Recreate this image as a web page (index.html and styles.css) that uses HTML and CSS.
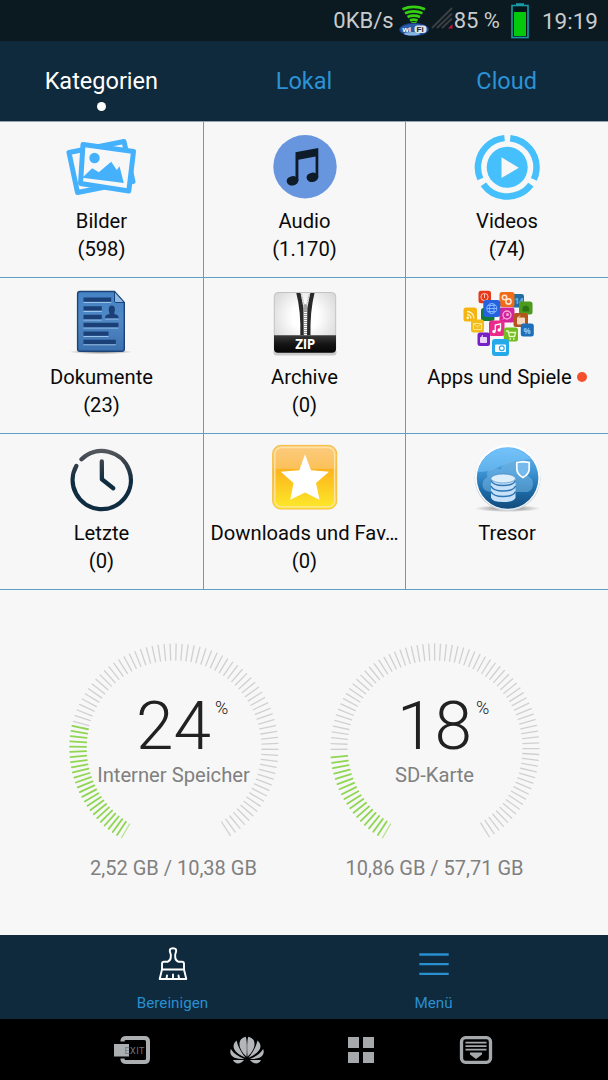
FILE: index.html
```
<!DOCTYPE html>
<html lang="de">

<head>
  <meta charset="UTF-8">
  <meta name="viewport" content="width=device-width, initial-scale=1.0">
  <title>Dateimanager</title>
  <link rel="stylesheet" href="styles.css">
</head>

<body>

  <div class="status">
    <span class="status__speed">0KB/s</span>
    <svg class="status__wifi" width="32" height="32" viewBox="0 0 32 32">
      <g fill="none" stroke="#35d010" stroke-width="2.800">
        <path d="M3.500 4.200Q14.500-.5 26 4.200"/>
        <path d="M6 8.200Q14.500 4.500 23.500 8.200"/>
        <path d="M8.500 12Q14.500 9.300 21 12"/>
        <path d="M11 15.500Q14.500 13.600 18.500 15.500"/>
        <path d="M12.500 18.500H17.500" stroke-width="3"/>
      </g>
      <ellipse cx="15" cy="24.500" rx="14.500" ry="6.200" fill="#2a5ca6" stroke="#18357c"/>
      <ellipse cx="13" cy="28.800" rx="8" ry="1.800" fill="#86b6e0"/>
      <rect x="15.500" y="20.500" width="12" height="7.500" rx="3" fill="#dde3e8"/>
      <text x="3.500" y="27" class="wifi-text" fill="#fff">wi</text>
      <text x="17.500" y="27" class="wifi-text" fill="#222">Fi</text>
    </svg>
    <svg class="status__signal" width="22" height="22" viewBox="0 0 22 22">
      <path d="M1 21 21 1M6 21 21 6.500M11 21 21 11.500" stroke="#3b3f42" stroke-width="2"/>
      <path d="M17 21.500 21.500 17V21.500Z" fill="#c2183c"/>
    </svg>
    <span class="status__percent">85 %</span>
    <svg class="status__battery" width="18" height="36" viewBox="0 0 18 36">
      <path d="M5 1.200H13" stroke="#189aa8" stroke-width="2"/>
      <rect x="1" y="2.500" width="16" height="32" fill="#06151a" stroke="#189aa8" stroke-width="1.600"/>
      <rect x="3" y="9" width="12" height="24" fill="#04c80c"/>
    </svg>
    <span class="status__time">19:19</span>
  </div>

  <div class="tabs">
    <div class="tab tab_active">Kategorien</div>
    <div class="tab">Lokal</div>
    <div class="tab">Cloud</div>
  </div>

  <div class="categories">
    <div class="category">
      <svg class="category__icon" viewBox="0 0 72 72">
        <g fill="#f7f7f7" stroke="#45b1fd" stroke-width="5" stroke-linejoin="round">
          <path d="M3 21.500 58 10.500 67 50.500 11.500 61.500Z"/>
          <path d="M17 13.500 67.500 20.500 62.800 60 14.500 52.500Z"/>
        </g>
        <circle cx="28.500" cy="27" r="5.200" fill="#45b1fd"/>
        <path d="M16.200 46.700 26.200 37.300 32.800 41.300 45.200 30.700 50.800 39 53.500 35.300 57.800 51.900Z" fill="#45b1fd"/>
      </svg>
      <div class="category__name">Bilder</div>
      <div class="category__count">(598)</div>
    </div>

    <div class="category">
      <svg class="category__icon" viewBox="0 0 72 72">
        <circle cx="36" cy="35.700" r="31.700" fill="#6796df"/>
        <g fill="#0e1b29">
          <path d="M26.500 21.300 49.300 17V46.500H46.600V25.500L29.400 28.700V50H26.500Z"/>
          <ellipse cx="23.500" cy="49.800" rx="5.900" ry="4.700" transform="rotate(-8 23.500 49.800)"/>
          <ellipse cx="43.400" cy="46.300" rx="5.900" ry="4.700" transform="rotate(-8 43.400 46.300)"/>
        </g>
      </svg>
      <div class="category__name">Audio</div>
      <div class="category__count">(1.170)</div>
    </div>

    <div class="category">
      <svg class="category__icon" viewBox="0 0 72 72">
        <circle cx="36.200" cy="36.300" r="29.300" fill="none" stroke="#45c0fd" stroke-width="6.500" stroke-dasharray="55.370 6" transform="rotate(-84.100 36.200 36.300)"/>
        <circle cx="36.200" cy="36.300" r="20.500" fill="#45c0fd"/>
        <path d="M30.500 26.300V47L47.800 36.700Z" fill="#f7f7f7"/>
      </svg>
      <div class="category__name">Videos</div>
      <div class="category__count">(74)</div>
    </div>

    <div class="category">
      <svg class="category__icon" viewBox="0 0 72 72">
        <defs>
          <linearGradient id="doc" x1="0" y1="0" x2="0" y2="1">
            <stop offset="0" stop-color="#4484c6"/>
            <stop offset="0.500" stop-color="#5088c4"/>
            <stop offset="1" stop-color="#3a70ae"/>
          </linearGradient>
          <radialGradient id="shadow">
            <stop offset="0" stop-color="#777"/>
            <stop offset="1" stop-color="#777" stop-opacity="0"/>
          </radialGradient>
        </defs>
        <ellipse cx="35" cy="64.800" rx="32" ry="2.500" fill="url(#shadow)"/>
        <path d="M14 4.500H48.500L58.300 15.500V62Q58.300 64.200 56 64.200H14Q11.600 64.200 11.600 62V7Q11.600 4.500 14 4.500Z" fill="url(#doc)" stroke="#1c4478" stroke-width="1.400"/>
        <path d="M48.500 4.500 58.300 15.500H49.800Q48.500 15.500 48.500 14Z" fill="#8fb9e4" stroke="#1c4478"/>
        <path d="M17.500 15.500H45.200M17.500 24.300H35.800M17.500 33H35.800M39.200 32H52.500M17.500 41H52.500M17.500 49.500H42.500M17.500 57.700H49.800" stroke="#9cc2ea" stroke-width="1.200"/>
        <path d="M17.500 12.600H45.200M17.500 21.300H35.800M17.500 30H35.800M17.500 38H52.500M17.500 46.700H42.500M17.500 55H49.800" stroke="#1b4078" stroke-width="4.300"/>
        <path d="M39 31.300Q39 27.500 43.500 27 41 18.800 45.800 18.600 50.600 18.800 48.200 27 52.700 27.500 52.700 31.300Z" fill="#1b4078"/>
      </svg>
      <div class="category__name">Dokumente</div>
      <div class="category__count">(23)</div>
    </div>

    <div class="category">
      <svg class="category__icon" viewBox="0 0 72 72">
        <defs>
          <radialGradient id="zip" cx="0.500" cy="0.400" r="0.700">
            <stop offset="0.300" stop-color="#fff"/>
            <stop offset="1" stop-color="#cfcfcf"/>
          </radialGradient>
          <linearGradient id="zipBase" x1="0" y1="0" x2="0" y2="1">
            <stop offset="0" stop-color="#3a3a3a"/>
            <stop offset="0.500" stop-color="#151515"/>
            <stop offset="1" stop-color="#050505"/>
          </linearGradient>
        </defs>
        <rect x="4.500" y="62" width="63" height="6.500" rx="3" fill="#cacaca"/>
        <rect x="5.300" y="5.500" width="61.400" height="60" rx="4" fill="url(#zip)" stroke="#c2c2c2"/>
        <path d="M27.300 6H31.500L34.500 21 34.800 48.300H31.300Q32 24 27.300 6Z" fill="#292929"/>
        <path d="M45.500 6H41.300L38.300 21 38 48.300H41.500Q41 24 45.500 6Z" fill="#292929"/>
        <path d="M32.500 7 35.300 19M40.300 7 37.500 19" stroke="#b5b5b5" stroke-width="1.200" stroke-dasharray="1 0.600"/>
        <path d="M36.400 18V48" stroke="#9a9a9a" stroke-width="3.200" stroke-dasharray="1 1"/>
        <rect x="34.700" y="17" width="3.400" height="7" rx="1.500" fill="#a5a5a5"/>
        <path d="M5 48.300H67V62Q67 65.700 63 65.700H9Q5 65.700 5 62Z" fill="url(#zipBase)"/>
        <text x="36" y="62" class="zip-text" text-anchor="middle" fill="#fff">ZIP</text>
      </svg>
      <div class="category__name">Archive</div>
      <div class="category__count">(0)</div>
    </div>

    <div class="category">
      <svg class="category__icon" viewBox="0 0 72 72">
        <rect x="7.500" y="3.700" width="12.500" height="12.500" rx="2.500" fill="#e5391c"/>
        <circle cx="13.500" cy="10" r="3.600" fill="none" stroke="#ffc3b0"/>
        <path d="M13.500 7V11" stroke="#ffc3b0"/>
        <rect x="40" y="7" width="13" height="13.500" rx="2.500" fill="#1f6fa6"/>
        <text x="43.500" y="17" class="tile-text" fill="#74b8e4">14</text>
        <rect x="48" y="14.500" width="13.500" height="13" rx="2.500" fill="#4d9a1c"/>
        <path d="M51.500 24.500H58V22A3.200 3.200 0 0 0 51.500 22Z" fill="#2b7413"/>
        <rect x="10" y="21" width="13.500" height="13" rx="2.500" fill="#157a37"/>
        <rect x="28.500" y="5" width="15" height="15" rx="2.500" fill="#ef6d1a"/>
        <g fill="none" stroke="#ffe3cc" stroke-width="1.600">
          <circle cx="33.500" cy="10.500" r="2.200"/>
          <circle cx="37.500" cy="14.500" r="2.600"/>
        </g>
        <rect x="28.500" y="20.500" width="15" height="15" rx="2.500" fill="#d3249b"/>
        <circle cx="36" cy="28" r="4" fill="none" stroke="#f6a6dc" stroke-width="1.300"/>
        <circle cx="36.500" cy="27.500" r="1.500" fill="#f6a6dc"/>
        <path d="M31.500 32.500 34 30.500" stroke="#f6a6dc"/>
        <rect x="42.500" y="26" width="14.500" height="14" rx="2.500" fill="#b4561b"/>
        <path d="M46.500 31H53.500V37H46.500ZM46.500 31 49 28.500" fill="#f5d8bd" stroke="#f5d8bd"/>
        <rect x="12.300" y="13" width="17" height="17" rx="3" fill="#2462e2"/>
        <g fill="none" stroke="#83b5fb">
          <circle cx="20.800" cy="21.500" r="5"/>
          <ellipse cx="20.800" cy="21.500" rx="2.300" ry="5"/>
          <path d="M15.800 21.500H25.800M16.800 18.500H24.800M16.800 24.500H24.800"/>
        </g>
        <rect x="-7.500" y="20.500" width="13.500" height="14" rx="2.500" fill="#f4b512"/>
        <g fill="none" stroke="#fff2bd" stroke-width="1.300">
          <path d="M-4 27.500A4 4 0 0 1 0 31.500M-4 24.500A7 7 0 0 1 3 31.500"/>
          <circle cx="-3.200" cy="30.800" r="0.700"/>
        </g>
        <rect x="0" y="32.500" width="13" height="13" rx="2.500" fill="#f2bd1a"/>
        <path d="M2.500 36.500H10.500V42.500H2.500ZM2.500 36.500 6.500 40 10.500 36.500" fill="none" stroke="#fbe48c"/>
        <rect x="49.800" y="36.500" width="13" height="13" rx="2.500" fill="#1e6fb9"/>
        <text x="52.500" y="46.500" class="tile-text" fill="#8cc8f7">%</text>
        <rect x="18" y="33.500" width="15.500" height="15.500" rx="2.500" fill="#ea2b8b"/>
        <path d="M24.300 44V38L29.500 36.800V42.500" fill="none" stroke="#fff" stroke-width="1.300"/>
        <circle cx="23" cy="44.500" r="1.700" fill="#fff"/>
        <circle cx="28.200" cy="43" r="1.700" fill="#fff"/>
        <rect x="32.800" y="40.500" width="14.200" height="14" rx="2.500" fill="#72bd20"/>
        <path d="M35 44H37L38.500 49.500H43.500L44.500 45.500H38" fill="none" stroke="#e7f9c8" stroke-width="1.300"/>
        <path d="M38.500 52H40M42 52H43.500" stroke="#e7f9c8" stroke-width="1.600"/>
        <rect x="6.500" y="45.500" width="12.500" height="13.500" rx="2.500" fill="#7621c5"/>
        <path d="M9.500 50.500H15.500V55.500H9.500ZM11 50V48.800H12" fill="#ead4fa" stroke="#ead4fa"/>
        <rect x="21" y="52" width="17" height="17" rx="3" fill="#26a9e8"/>
        <rect x="24" y="57.500" width="11" height="7.500" rx="1" fill="#fff"/>
        <circle cx="30.800" cy="61.200" r="2.400" fill="#fff" stroke="#26a9e8" stroke-width="1.200"/>
      </svg>
      <div class="category__name category__name_new">Apps und Spiele</div>
    </div>

    <div class="category">
      <svg class="category__icon" viewBox="0 0 72 72">
        <defs>
          <linearGradient id="clock" gradientUnits="userSpaceOnUse" x1="0" y1="5" x2="0" y2="38">
            <stop offset="0" stop-color="#5a5d62"/>
            <stop offset="0.400" stop-color="#3b434c"/>
            <stop offset="1" stop-color="#0f2c40"/>
          </linearGradient>
        </defs>
        <g fill="none" stroke="url(#clock)" stroke-width="4.300" stroke-linecap="round" stroke-linejoin="round">
          <path d="M15.500 16.200A29.100 29.100 0 1 1 10.300 23"/>
          <path d="M35.800 18.500 35.900 36.300 47.300 45.200"/>
        </g>
      </svg>
      <div class="category__name">Letzte</div>
      <div class="category__count">(0)</div>
    </div>

    <div class="category">
      <svg class="category__icon" viewBox="0 0 72 72">
        <defs>
          <linearGradient id="fav" x1="0" y1="0" x2="0" y2="1">
            <stop offset="0" stop-color="#fbcb80"/>
            <stop offset="0.360" stop-color="#fcc159"/>
            <stop offset="0.380" stop-color="#fcb41c"/>
            <stop offset="1" stop-color="#fdea2a"/>
          </linearGradient>
        </defs>
        <rect x="3.700" y="2.400" width="64" height="63.600" rx="8" fill="url(#fav)" stroke="#f6bd3c"/>
        <rect x="5.800" y="4.500" width="59.800" height="59.400" rx="6.500" fill="none" stroke="#fde3a4" stroke-width="1.400"/>
        <path d="M36 11.300 42 27.300 60 28.700 47 39.900 50.500 56.700 36 49.500 21.300 56.700 24.500 39.900 11.700 28.700 30.300 27.300Z" fill="#fff"/>
      </svg>
      <div class="category__name">Downloads und Fav…</div>
      <div class="category__count">(0)</div>
    </div>

    <div class="category">
      <svg class="category__icon" viewBox="0 0 72 72">
        <defs>
          <linearGradient id="safe" x1="0" y1="0" x2="0" y2="1">
            <stop offset="0" stop-color="#6abbf6"/>
            <stop offset="0.400" stop-color="#3e94d4"/>
            <stop offset="0.700" stop-color="#1e6ca8"/>
            <stop offset="1" stop-color="#114b7d"/>
          </linearGradient>
        </defs>
        <ellipse cx="36.500" cy="65.500" rx="33" ry="3.500" fill="url(#shadow)"/>
        <circle cx="36.600" cy="35" r="33" fill="#d0d8df"/>
        <circle cx="36.600" cy="34" r="32.600" fill="#fcfdfe"/>
        <circle cx="36.600" cy="35" r="30.800" fill="url(#safe)"/>
        <path d="M6.500 29Q17 29 27 24.500 42 17 60 16A30.800 30.800 0 0 0 6.500 29Z" fill="#7cc8fd" opacity="0.550"/>
        <path d="M20 49Q11 48 11.500 41 12 36 16.500 34 14 27 22 25.500 27 24.500 29.500 27 32 18.500 41 18.500 50 19 52.500 28 55 32 61 36 64 46 57 49Z" fill="#7cbce8" opacity="0.500"/>
        <path d="M20 35.500V54.500Q21 59 32.200 59 43.500 59 44.500 54.500V35.500Z" fill="#c7e1f8"/>
        <ellipse cx="32.200" cy="35.500" rx="12.300" ry="4.500" fill="#ddeefb" stroke="#3b83bd" stroke-width="0.600"/>
        <g fill="none" stroke="#2e77b4" stroke-width="1.500">
          <path d="M20 37.500Q22 42.500 32.200 42.500 42.500 42.500 44.500 37.500"/>
          <path d="M20 43Q22 48 32.200 48 42.500 48 44.500 43"/>
          <path d="M20 48.500Q22 53.500 32.200 53.500 42.500 53.500 44.500 48.500"/>
        </g>
        <path d="M45.800 19.500 52 18.700 58.200 19.500V26Q58 31.500 52 34.500 46 31.500 45.800 26Z" fill="#75b9ed" stroke="#fff" stroke-width="1.700"/>
      </svg>
      <div class="category__name">Tresor</div>
    </div>
  </div>

  <div class="storage">
    <div class="storage__item">
      <div class="gauge">
        <svg class="gauge__dial" viewBox="-105 -105 210 210" data-used="25" data-used-step="2.880" data-free="68" data-free-start="104.800" data-free-step="3.320"></svg>
        <div class="gauge__info">
          <div class="gauge__value">24<span class="gauge__unit">%</span></div>
          <div class="gauge__label">Interner Speicher</div>
        </div>
      </div>
      <div class="storage__size">2,52 GB / 10,38 GB</div>
    </div>

    <div class="storage__item">
      <div class="gauge">
        <svg class="gauge__dial" viewBox="-105 -105 210 210" data-used="18" data-used-step="3.030" data-free="75" data-free-start="89.200" data-free-step="3.235"></svg>
        <div class="gauge__info">
          <div class="gauge__value">18<span class="gauge__unit">%</span></div>
          <div class="gauge__label">SD-Karte</div>
        </div>
      </div>
      <div class="storage__size">10,86 GB / 57,71 GB</div>
    </div>
  </div>

  <div class="toolbar">
    <div class="toolbar__button">
      <svg class="toolbar__icon" width="34" height="34" viewBox="0 0 34 34" fill="none" stroke="#fff" stroke-width="1.900" stroke-linejoin="round" stroke-linecap="round">
        <path d="M14.800 7.500C12.500 2 14.500 1.200 17 1.200S21.500 2 19.200 7.500V10Q19.200 13.500 22.500 14.800H26Q28 14.800 28 17V22.500L30.300 32H3.700L6 22.500V17Q6 14.800 8 14.800H11.500Q14.800 13.500 14.800 10Z"/>
        <path d="M6 22.500H28M11 28.500 10.500 31.500M17 27.500V31.500M22.500 28.500 23 31.500"/>
      </svg>
      <span>Bereinigen</span>
    </div>
    <div class="toolbar__button">
      <svg class="toolbar__icon" width="34" height="34" viewBox="0 0 34 34" stroke="#2a8fd0" stroke-width="2.300">
        <path d="M2.300 7.500H31.700M2.300 17.200H31.700M2.300 26.800H31.700"/>
      </svg>
      <span>Menü</span>
    </div>
  </div>

  <div class="navbar">
    <svg class="navbar__icon" width="36" height="28" viewBox="0 0 36 28">
      <path d="M8.500 5.500V4.500Q9 2 12 2H30.500Q34 2 34 5.500V22.500Q34 26 30.500 26H12Q9 26 8.500 23.500V22.500" fill="none" stroke="#abafb1" stroke-width="4"/>
      <rect x="0" y="8" width="15" height="12.500" fill="#abafb1"/>
      <text x="10.500" y="17.800" class="exit-text" fill="#747779">EXIT</text>
    </svg>
    <svg class="navbar__icon" width="34" height="28" viewBox="0 0 34 28" fill="#b3b7b9">
      <path d="M16.500 20.800C7 12 7.500 2.500 15.800.8 17.200 6 16.900 14 16.500 20.800Z"/>
      <path d="M17.500 20.800C27 12 26.500 2.500 18.200.8 16.800 6 17.100 14 17.500 20.800Z"/>
      <path d="M15.600 21.800C3.500 16.500.5 10 6.500 4.500 8 11 11.500 17 15.600 21.800Z"/>
      <path d="M18.400 21.800C30.500 16.500 33.500 10 27.500 4.500 26 11 22.500 17 18.400 21.800Z"/>
      <path d="M14.500 22.800C2.500 23.800-1.200 18.500.8 13 4 18 9 21 14.500 22.800Z"/>
      <path d="M19.500 22.800C31.500 23.800 35.200 18.500 33.200 13 30 18 25 21 19.500 22.800Z"/>
      <path d="M14 24C10.500 28.500 5 28.500 3 24Z"/>
      <path d="M20 24C23.500 28.500 29 28.500 31 24Z"/>
    </svg>
    <svg class="navbar__icon" width="28" height="28" viewBox="0 0 28 28" fill="#a5a9ab">
      <rect x="1" y="1" width="11" height="11"/>
      <rect x="16" y="1" width="11" height="11"/>
      <rect x="1" y="16" width="11" height="11"/>
      <rect x="16" y="16" width="11" height="11"/>
    </svg>
    <svg class="navbar__icon" width="34" height="28" viewBox="0 0 34 28">
      <rect x="2.500" y="1.700" width="29" height="24.600" rx="4" fill="none" stroke="#a5a9ab" stroke-width="3.300"/>
      <path d="M6.500 6.700H27.500M6.500 10.200H27.500M6.500 13.700H27.500" stroke="#a5a9ab" stroke-width="1.800"/>
      <path d="M11 16.500H23V18.500L17 23 11 18.500Z" fill="#a5a9ab"/>
    </svg>
  </div>

  <script>
    const dials = document.querySelectorAll('.gauge__dial');

    // angle is counted clockwise from the bottom of the dial
    function addTick(dial, angle, className) {
      const tick = document.createElementNS('http://www.w3.org/2000/svg', 'line');
      tick.setAttribute('y1', 88);
      tick.setAttribute('y2', 104);
      tick.setAttribute('transform', `rotate(${angle})`);
      tick.setAttribute('class', className);
      dial.append(tick);
    }

    dials.forEach(dial => {
      const { used, usedStep, free, freeStart, freeStep } = dial.dataset;

      addTick(dial, 30.3, 'tick tick_first');
      for (let i = 1; i <= used; i++) {
        addTick(dial, 30.3 + i * usedStep, 'tick tick_used');
      }
      for (let i = 0; i < free; i++) {
        addTick(dial, +freeStart + i * freeStep, 'tick');
      }
    });
  </script>

</body>

</html>
```
FILE: styles.css
```
body {
  margin: 0;
  width: 608px;
  height: 1080px;
  overflow: hidden;
  display: flex;
  flex-direction: column;
  background-color: #f7f7f7;
  font-family: Roboto, "Liberation Sans", sans-serif;
}

svg {
  display: block;
  flex: none;
}

.status {
  display: flex;
  align-items: center;
  justify-content: flex-end;
  height: 41px;
  padding-right: 10px;
  background-color: #0b1920;
  color: #c9cbcc;
  font-size: 22px;
}

.status__time {
  font-size: 22.5px;
}

.status__wifi {
  margin-left: 5px;
}

.status__signal {
  margin: 0 1px 6px 0;
}

.status__battery {
  margin: 0 13px 0 11px;
}

.wifi-text {
  font: bold 8px "Liberation Sans", sans-serif;
}

.tabs {
  display: grid;
  grid-template-columns: repeat(3, 1fr);
  height: 80px;
  border-bottom: 1px solid #93a3b0;
  background-color: #0f2a3c;
}

.tab {
  display: flex;
  flex-direction: column;
  align-items: center;
  padding-top: 26px;
  line-height: 28px;
  color: #2b92d6;
  font-size: 23.5px;
}

.tab_active {
  color: #fff;
}

.tab_active::after {
  content: "";
  width: 9px;
  height: 9px;
  margin-top: 7px;
  border-radius: 50%;
  background-color: #fff;
}

.categories {
  display: grid;
  grid-template-columns: 204px 202px 202px;
  grid-auto-rows: 156px;
}

.category {
  box-sizing: border-box;
  min-width: 0;
  padding: 9px 5px 0;
  border-right: 1px solid #5f9fc6;
  border-bottom: 1px solid #5f9fc6;
  text-align: center;
  font-size: 20.2px;
  line-height: 28px;
  color: #0a0a0a;
}

.category:nth-child(3n) {
  border-right: none;
}

.category__icon {
  width: 72px;
  height: 72px;
  margin: 0 auto 4px;
  overflow: visible;
}

.category__name {
  white-space: nowrap;
}

.category__name_new {
  display: flex;
  align-items: center;
  justify-content: center;
  gap: 5px;
}

.category__name_new::after {
  content: "";
  width: 10px;
  height: 10px;
  border-radius: 50%;
  background-color: #f5502d;
}

.zip-text {
  font: bold 13.5px "Open Sans", sans-serif;
  letter-spacing: -0.5px;
}

.tile-text {
  font: bold 8px "Open Sans", sans-serif;
}

.storage {
  flex: 1;
  display: grid;
  grid-template-columns: 261px 261px;
  justify-content: center;
  padding-top: 53px;
  color: #808080;
  font-size: 20px;
  line-height: 24px;
}

.storage__item {
  text-align: center;
}

.storage__size {
  margin-top: 3px;
}

.gauge {
  display: grid;
  justify-content: center;
}

.gauge__dial,
.gauge__info {
  grid-area: 1 / 1;
}

.gauge__dial {
  width: 210px;
  height: 210px;
}

.gauge__info {
  padding-top: 49px;
}

.gauge__value {
  position: relative;
  width: max-content;
  margin: 0 auto 3px;
  color: #212121;
  font-size: 67.5px;
  font-weight: 300;
  line-height: 68px;
}

/* sits above the digits like a superscript */
.gauge__unit {
  position: absolute;
  top: 6px;
  left: 100%;
  margin-left: 4px;
  font-size: 18px;
  line-height: 20px;
}

.gauge__label {
  font-size: 20.2px;
}

.tick {
  stroke: #d0d0d0;
  stroke-width: 1.3;
  stroke-linecap: round;
}

.tick_used {
  stroke: #8fd653;
  stroke-width: 1.8;
}

.tick_first {
  stroke: #b5e392;
}

.toolbar {
  display: grid;
  grid-template-columns: 261px 261px;
  justify-content: center;
  height: 84px;
  padding-right: 2px;
  background-color: #0f2a3c;
}

.toolbar__button {
  display: flex;
  flex-direction: column;
  align-items: center;
  padding-top: 12px;
  color: #2a8fd0;
  font-size: 15.2px;
  line-height: 18px;
}

.toolbar__icon {
  margin-bottom: 13px;
}

.navbar {
  display: grid;
  grid-template-columns: repeat(4, 114.7px);
  justify-content: center;
  align-items: center;
  justify-items: center;
  height: 61px;
  background-color: #000;
}

.exit-text {
  font: 9px Roboto, sans-serif;
  letter-spacing: 0.5px;
}
```
